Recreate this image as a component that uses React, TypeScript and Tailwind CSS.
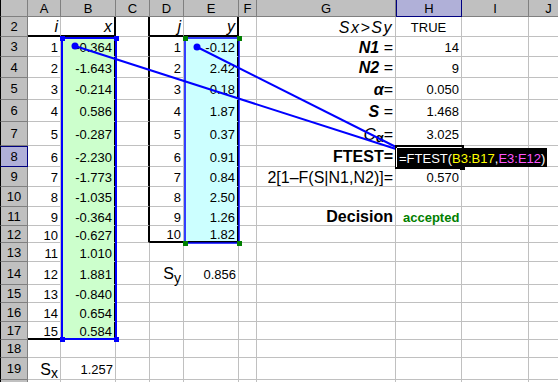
import React from 'react';

const COLS = ['A', 'B', 'C', 'D', 'E', 'F', 'G', 'H', 'I', 'J'];
const ROWS = Array.from({ length: 19 }, (_, i) => i + 2);

const X = ['-0.364', '-1.643', '-0.214', '0.586', '-0.287', '-2.230', '-1.773', '-1.035', '-0.364', '-0.627', '1.010', '1.881', '-0.840', '0.654', '0.584'];
const Y = ['-0.12', '2.42', '0.18', '1.87', '0.37', '0.91', '0.84', '2.50', '1.26', '1.82'];

type Entry = { v: React.ReactNode; align?: 'r' | 'c' | 'l'; big?: boolean };

const DATA: Record<string, Entry> = {
    A2: { v: <i>i</i>, big: true },
    B2: { v: <i>x</i>, big: true },
    D2: { v: <i>j</i>, big: true },
    E2: { v: <i>y</i>, big: true },
    G2: { v: <i className="tracking-[1.5px]">Sx&gt;Sy</i>, big: true },
    H2: { v: 'TRUE', align: 'c' },
    G3: { v: <><b><i>N1</i></b>{'\u00a0='}</>, big: true },
    H3: { v: '14' },
    G4: { v: <><b><i>N2</i></b>{'\u00a0='}</>, big: true },
    H4: { v: '9' },
    G5: { v: <><b><i>α</i></b>=</>, big: true },
    H5: { v: '0.050' },
    G6: { v: <><b><i>S</i></b>{'\u00a0='}</>, big: true },
    H6: { v: '1.468' },
    G7: { v: <><i className="text-[17px]">C</i><sub className="text-[13px] font-bold">α</sub>=</>, big: true },
    H7: { v: '3.025' },
    G8: { v: <b>FTEST=</b>, big: true },
    G9: { v: '2[1–F(S|N1,N2)]=', big: true },
    H9: { v: '0.570' },
    G11: { v: <b>Decision</b>, big: true },
    H11: { v: <b className="text-[#008000]">accepted</b>, align: 'l' },
    D14: { v: <>S<sub className="text-[14px]">y</sub></>, big: true },
    E14: { v: '0.856' },
    A19: { v: <>S<sub className="text-[14px]">x</sub></>, big: true },
    B19: { v: '1.257' },
};

X.forEach((x, i) => {
    DATA[`A${i + 3}`] = { v: String(i + 1) };
    DATA[`B${i + 3}`] = { v: x };
});
Y.forEach((y, i) => {
    DATA[`D${i + 3}`] = { v: String(i + 1) };
    DATA[`E${i + 3}`] = { v: y };
});

function Cell({ col, row }: { col: string; row: number }) {
    const d = DATA[col + row];
    const inB = col === 'B' && row >= 3 && row <= 17;
    const inE = col === 'E' && row >= 3 && row <= 12;

    const thickRight =
        (col === 'B' && row >= 2 && row <= 17) ||
        (col === 'C' && row >= 2 && row <= 12) ||
        (col === 'E' && row >= 2 && row <= 12);
    const thickBottom =
        (row === 2 && ['A', 'B', 'D', 'E'].includes(col)) ||
        (row === 17 && (col === 'A' || col === 'B')) ||
        (row === 12 && (col === 'D' || col === 'E'));

    const right = thickRight ? 'border-r-2 border-r-black' : 'border-r border-r-[#c0c0c0]';
    const bottom = thickBottom
        ? 'border-b-2 border-b-black'
        : inB
            ? 'border-b border-b-[#ccffcc]'
            : inE
                ? 'border-b border-b-[#ccffff]'
                : 'border-b border-b-[#c0c0c0]';
    const bg = inB ? 'bg-[#ccffcc]' : inE ? 'bg-[#ccffff]' : 'bg-white';
    const align = d?.align === 'c' ? 'justify-center' : d?.align === 'l' ? 'justify-start pl-[7px]' : 'justify-end pr-[2px]';
    const text = d?.big ? 'text-[16px] leading-[18px]' : 'text-[13px] leading-[15px]';

    return (
        <div className={`flex items-center pt-[2px] whitespace-nowrap min-w-0 ${right} ${bottom} ${bg} ${align} ${text}`}>
            {d?.v}
        </div>
    );
}

export default function App() {
    return (
        <div className="relative w-[558px] h-[382px] overflow-hidden bg-white text-black font-['Liberation_Sans',Arial,sans-serif]">
            <div className="grid grid-cols-[28px_33px_55px_34px_34px_55px_18px_139px_66px_67px_40px] grid-rows-[17px_20px_20px_21px_22px_22px_24px_21px_20px_20px_19px_17px_19px_23px_18px_19px_18px_18px_22px_22px]">
                <div className="bg-[#c0c0c0] border-l border-l-black border-r border-r-[#808080] border-b border-b-[#808080]" />
                {COLS.map((c) => (
                    <div
                        key={c}
                        className={`flex items-center justify-center text-[13px] leading-[15px] ${c === 'H'
                            ? 'bg-[#b0b0d8] border-r border-r-[#000080] border-l border-l-[#000080] border-b border-b-[#000080]'
                            : 'bg-[#c0c0c0] border-r border-r-[#808080] border-b border-b-[#808080]'
                            }`}
                    >
                        {c}
                    </div>
                ))}
                {ROWS.map((r) => (
                    <React.Fragment key={r}>
                        <div
                            className={`flex items-center justify-center text-[13px] leading-[15px] border-l border-l-black ${r === 8
                                ? 'bg-[#b0b0d8] border-r border-r-[#000080] border-t border-t-[#000080] border-b border-b-[#000080]'
                                : 'bg-[#c0c0c0] border-r border-r-[#808080] border-b border-b-[#808080]'
                                }`}
                        >
                            {r < 20 ? r : ''}
                        </div>
                        {COLS.map((c) => (
                            <Cell key={c + r} col={c} row={r} />
                        ))}
                    </React.Fragment>
                ))}
            </div>

            {/* range finder outlines and precedent arrows */}
            <svg className="absolute inset-0 pointer-events-none" width="558" height="382">
                <rect x="62" y="38" width="54" height="301" fill="none" stroke="#0000ff" strokeWidth="2" />
                <rect x="185" y="38" width="54" height="205" fill="none" stroke="#0000ff" strokeWidth="1.5" />
                {[[62, 38], [116, 38], [62, 339], [116, 339]].map(([x, y]) => (
                    <rect key={`b${x}${y}`} x={x - 2} y={y - 2} width="5" height="5" fill="#0000ff" />
                ))}
                {[[185, 38], [239, 38], [185, 243], [239, 243]].map(([x, y]) => (
                    <rect key={`e${x}${y}`} x={x - 2} y={y - 2} width="5" height="5" fill="#008000" />
                ))}
                <line x1="75" y1="46" x2="396" y2="149" stroke="#0000ff" strokeWidth="2" />
                <line x1="197" y1="47" x2="396" y2="147" stroke="#0000ff" strokeWidth="2" />
                <circle cx="75" cy="46" r="3.5" fill="#0000ff" />
                <circle cx="197" cy="47" r="3.5" fill="#0000ff" />
            </svg>

            {/* active cell in edit mode */}
            <div className="absolute left-[395px] top-[145px] w-[69px] h-[24px] border-2 border-black" />
            <div className="absolute left-[460px] top-[165px] w-[5px] h-[5px] bg-black" />
            <div className="absolute left-[396px] top-[148px] w-[151px] h-[19px] bg-black border-l border-l-white flex items-center pt-[2px] pl-[2px] text-[13px] leading-[15px] text-white whitespace-nowrap">
                =FTEST(<span className="text-[#ffff00]">B3:B17</span>,<span className="text-[#ff55ff]">E3:E12</span>)
            </div>
        </div>
    );
}
